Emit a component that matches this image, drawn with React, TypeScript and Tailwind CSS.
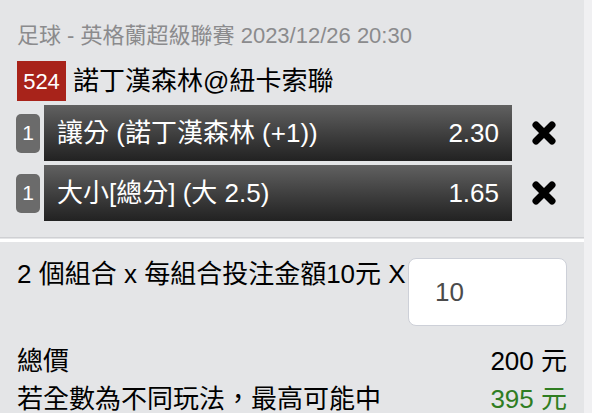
import React from "react";

const font = {
  fontFamily: '"Liberation Sans", "Noto Sans CJK TC", sans-serif',
};

function CloseIcon() {
  return (
    <svg width="26" height="26" viewBox="0 0 26 26">
      <path
        d="M5 5 L21 21 M21 5 L5 21"
        stroke="#000"
        strokeWidth="7"
        strokeLinecap="round"
      />
    </svg>
  );
}

const bets = [
  { label: "讓分 (諾丁漢森林 (+1))", odds: "2.30" },
  { label: "大小[總分] (大 2.5)", odds: "1.65" },
];

export default function App() {
  return (
    <div className="flex h-[413px] w-[592px] overflow-hidden" style={font}>
      <div className="flex w-[584px] flex-col bg-[#e4e5e7]">
        {/* Match info */}
        <div className="shrink-0 px-[17px] pt-[22px]">
          <div className="text-[22px] leading-[28px] text-[#8b8b8d]">
            足球 - 英格蘭超級聯賽 2023/12/26 20:30
          </div>
          <div className="mt-[11px] flex items-center">
            <div className="flex h-[40px] w-[49px] items-center justify-center bg-[#a8231a] text-[22px] text-white">
              524
            </div>
            <div className="ml-[7px] text-[26px] leading-[32px] text-black">
              諾丁漢森林@紐卡索聯
            </div>
          </div>
        </div>

        {/* Selected bets */}
        <div className="mt-[4px] flex shrink-0 flex-col gap-[4px] pl-[16px]">
          {bets.map((b) => (
            <div key={b.odds} className="flex items-center">
              <div className="flex h-[39px] w-[24px] items-center justify-center rounded-[5px] bg-[#6b6b6b] text-[21px] text-white">
                1
              </div>
              <div className="ml-[4px] flex h-[56px] w-[468px] items-center justify-between bg-gradient-to-b from-[#616161] to-[#222222] px-[13px] text-[26px] text-white">
                <span>{b.label}</span>
                <span>{b.odds}</span>
              </div>
              <div className="ml-[19px] flex items-center">
                <CloseIcon />
              </div>
            </div>
          ))}
        </div>

        {/* Divider */}
        <div className="mt-[16px] h-px shrink-0 bg-[#cfd0d3]" />
        <div className="mt-px h-[3px] shrink-0 bg-white" />

        {/* Stake */}
        <div className="shrink-0 px-[17px] pt-[16px] text-[26px] text-black">
          <div className="flex items-start justify-between">
            <div className="leading-[32px]">2 個組合 x 每組合投注金額10元 X</div>
            <div className="flex h-[68px] w-[159px] items-center rounded-[8px] border-[1.5px] border-[#cdd0d8] bg-white pl-[26px] text-[#4b4b4b]">
              10
            </div>
          </div>
          <div className="mt-[16px] leading-[38px]">
            <div className="flex justify-between">
              <span>總價</span>
              <span>200 元</span>
            </div>
            <div className="flex justify-between">
              <span>若全數為不同玩法，最高可能中</span>
              <span className="text-[#2f7d22]">395 元</span>
            </div>
          </div>
        </div>
      </div>
      <div className="w-[8px] bg-[#f0f0f2]" />
    </div>
  );
}
